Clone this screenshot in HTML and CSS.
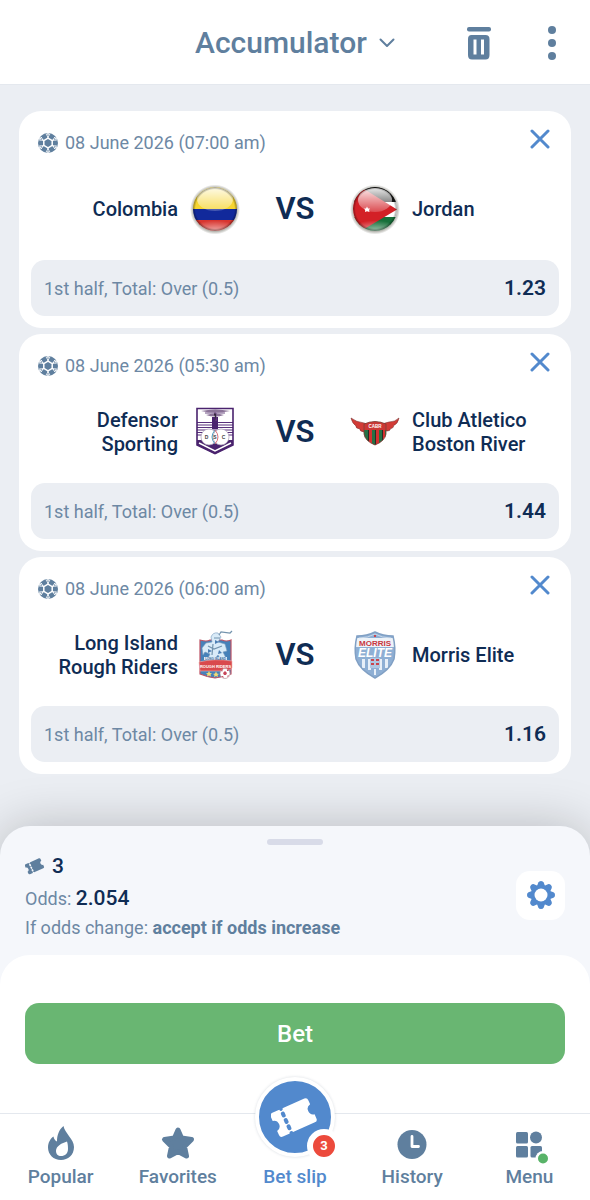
FILE: index.html
```html
<!DOCTYPE html>
<html lang="en">
<head>
<meta charset="utf-8">
<meta name="viewport" content="width=device-width, initial-scale=1">
<title>Accumulator</title>
<link rel="stylesheet" href="styles.css">
</head>
<body>
<svg class="defs" width="0" height="0" aria-hidden="true">
  <defs>
    <symbol id="ball" viewBox="0 0 20 20">
      <circle cx="10" cy="10" r="10" fill="#5f7f9e"/>
      <path d="M10 5.200 14.200 7.600V12.400L10 14.800 5.800 12.400V7.600Z" stroke="#fff" stroke-width="1.500" fill="none"/>
      <path d="M10 5.200V0M14.200 7.600 18.700 5M14.200 12.400 18.700 15M10 14.800V20M5.800 12.400 1.300 15M5.800 7.600 1.300 5" stroke="#fff" stroke-width="1.300" fill="none"/>
      <g stroke="#fff" stroke-width=".8" fill="#5f7f9e">
        <path id="seam" d="M8.200 1.200 10 4 11.800 1.200Z"/>
        <use href="#seam" transform="rotate(60 10 10)"/><use href="#seam" transform="rotate(120 10 10)"/><use href="#seam" transform="rotate(180 10 10)"/><use href="#seam" transform="rotate(240 10 10)"/><use href="#seam" transform="rotate(300 10 10)"/>
      </g>
    </symbol>
    <symbol id="cross" viewBox="0 0 20 20">
      <path d="M2 2 18 18M18 2 2 18" stroke="#5289cd" stroke-width="3" stroke-linecap="round"/>
    </symbol>
    <symbol id="ticket" viewBox="0 0 48 40">
      <g transform="rotate(-24 24 20)">
        <path fill="currentColor" d="M5 7H12.500A1.800 1.800 0 0 0 16.100 7H40Q43 7 43 10V14.500A5.600 5.600 0 0 0 43 25.500V30Q43 33 40 33H16.100A1.800 1.800 0 0 0 12.500 33H5Q2 33 2 30V25.500A5.600 5.600 0 0 0 2 14.500V10Q2 7 5 7ZM12.300 12V14A2 2 0 0 0 16.300 14V12A2 2 0 0 0 12.300 12ZM12.300 19V21A2 2 0 0 0 16.300 21V19A2 2 0 0 0 12.300 19ZM12.300 26V28A2 2 0 0 0 16.300 28V26A2 2 0 0 0 12.300 26Z"/>
      </g>
    </symbol>
    <linearGradient id="gloss" x1="0" y1="0" x2="0" y2="1">
      <stop offset="0" stop-color="#fff" stop-opacity=".9"/>
      <stop offset="1" stop-color="#fff" stop-opacity=".2"/>
    </linearGradient>
    <radialGradient id="glow" cx=".5" cy="1" r=".9">
      <stop offset="0" stop-color="#fff" stop-opacity=".7"/>
      <stop offset="1" stop-color="#fff" stop-opacity="0"/>
    </radialGradient>
    <radialGradient id="rim">
      <stop offset=".88" stop-color="#000" stop-opacity="0"/>
      <stop offset="1" stop-color="#000" stop-opacity=".4"/>
    </radialGradient>
    <radialGradient id="halo">
      <stop offset=".88" stop-color="#332" stop-opacity=".35"/>
      <stop offset="1" stop-color="#332" stop-opacity="0"/>
    </radialGradient>
    <clipPath id="disc"><circle cx="25" cy="25" r="22"/></clipPath>
    <clipPath id="dsc-shield"><path d="M7 1H43V38L25 47 7 38Z"/></clipPath>
    <clipPath id="river-shield"><path d="M14 17Q25 12 36 17V27Q35 34 25 38 15 34 14 27Z"/></clipPath>
    <clipPath id="morris-shield"><path d="M7 6Q17 6 25 2 33 6 43 6 46 18 44 29 40 40 25 48 10 40 6 29 4 18 7 6Z"/></clipPath>
  </defs>
</svg>

<header class="topbar">
  <label class="slip-type">
    <select class="slip-select" aria-label="Bet slip type"><option>Accumulator</option></select>
    <svg class="chevron" viewBox="0 0 16 10" aria-hidden="true"><path d="M1.500 1.500 8 8 14.500 1.500" fill="none" stroke="#5f7f9e" stroke-width="2" stroke-linecap="round" stroke-linejoin="round"/></svg>
  </label>
  <div class="topbar-actions">
    <button class="icon-button" type="button" aria-label="Clear bet slip">
      <svg width="24" height="34" viewBox="0 0 24 34"><rect x="0" y="1" width="24" height="4.500" rx="2" fill="#5f7f9e"/><path fill="#5f7f9e" fill-rule="evenodd" d="M4.500 9H18.500Q22.500 9 22.500 13V29Q22.500 33.500 18.500 33.500H5Q1 33.500 1 29V13Q1 9 4.500 9ZM6.500 13.500V28.500H9.500V13.500ZM14 13.500V28.500H17V13.500Z"/></svg>
    </button>
    <button class="icon-button" type="button" aria-label="More">
      <svg width="8" height="36" viewBox="0 0 8 36" fill="#5f7f9e"><circle cx="4" cy="5" r="4"/><circle cx="4" cy="18" r="4"/><circle cx="4" cy="31" r="4"/></svg>
    </button>
  </div>
</header>

<main class="events">
  <article class="event">
    <div class="event-head">
      <svg class="ball" aria-hidden="true"><use href="#ball"/></svg>
      <time class="event-date">08 June 2026 (07:00 am)</time>
      <button class="remove" type="button" aria-label="Remove"><svg class="cross"><use href="#cross"/></svg></button>
    </div>
    <div class="match">
      <span class="team home">Colombia</span>
      <svg class="crest" viewBox="0 0 50 50" aria-hidden="true">
        <circle cx="25" cy="25.500" r="25" fill="url(#halo)"/>
        <g clip-path="url(#disc)">
          <path fill="#f6d531" d="M0 0H50V25H0Z"/><path fill="#11299b" d="M0 25H50V36H0Z"/><path fill="#d8352f" d="M0 36H50V50H0Z"/>
          <ellipse cx="25" cy="15" rx="18" ry="12" fill="url(#gloss)"/>
          <ellipse cx="25" cy="42" rx="16" ry="7" fill="url(#glow)"/>
          <circle cx="25" cy="25" r="22" fill="url(#rim)"/>
        </g>
      </svg>
      <span class="versus">VS</span>
      <svg class="crest" viewBox="0 0 50 50" aria-hidden="true">
        <circle cx="25" cy="25.500" r="25" fill="url(#halo)"/>
        <g clip-path="url(#disc)">
          <path fill="#161616" d="M0 0H50V18H0Z"/><path fill="#fff" d="M0 18H50V33H0Z"/><path fill="#17703a" d="M0 33H50V50H0Z"/>
          <path fill="#d32026" d="M0 0H6L47 25.500 6 50H0Z"/>
          <ellipse cx="25" cy="16" rx="17" ry="12" fill="url(#gloss)"/>
          <ellipse cx="25" cy="42" rx="16" ry="7" fill="url(#glow)"/>
          <circle cx="25" cy="25" r="22" fill="url(#rim)"/>
          <path fill="#fff" d="M17 22.500 18 24.500 20 24.500 19 26 19.500 28 17 27.200 15 28 15.200 26 14 24.500 16 24.500Z"/>
        </g>
      </svg>
      <span class="team">Jordan</span>
    </div>
    <div class="pick"><span>1st half, Total: Over (0.5)</span><strong class="pick-odds">1.23</strong></div>
  </article>

  <article class="event">
    <div class="event-head">
      <svg class="ball" aria-hidden="true"><use href="#ball"/></svg>
      <time class="event-date">08 June 2026 (05:30 am)</time>
      <button class="remove" type="button" aria-label="Remove"><svg class="cross"><use href="#cross"/></svg></button>
    </div>
    <div class="match">
      <span class="team home">Defensor<br>Sporting</span>
      <svg class="crest" viewBox="0 0 50 50" aria-hidden="true">
        <g clip-path="url(#dsc-shield)">
          <path fill="#fff" d="M0 0H50V50H0Z"/>
          <path stroke="#59307c" stroke-width="1" d="M7 15.500H43M7 18H43M7 20.500H43M7 23H43M7 25.500H43M7 28H43"/>
          <path fill="#fff" d="M19 9H31V15H19Z"/>
          <path fill="#4a236e" d="M22 10H28V22H22ZM7 33H43V50H7Z"/>
          <path fill="#8b7398" d="M11 4Q25 1 40 4 25 7 11 4ZM16 8Q25 5 34 8 25 11 16 8Z"/>
          <path stroke="#6f4c83" stroke-width="1" d="M15 6H35M24 6H26V14"/>
          <path fill="none" stroke="#fff" stroke-width="1.500" d="M9 36 25 44 41 36"/>
        </g>
        <circle cx="19" cy="30" r="8" fill="#fff" stroke="#a89cb4" stroke-width=".7"/><circle cx="31" cy="30" r="8" fill="#fff" stroke="#a89cb4" stroke-width=".7"/>
        <path d="M25 23Q19 30 25 37" fill="none" stroke="#519cbd" stroke-width="1"/><path d="M25 23Q31 30 25 37" fill="none" stroke="#dd6e77" stroke-width="1"/>
        <g class="crest-text" font-size="5" fill="#454545"><text x="16.500" y="31.800">D</text><text x="25" y="31.800">S</text><text x="33.500" y="31.800">C</text></g>
        <path d="M7 1.500H43V38L25 46.500 7 38Z" fill="none" stroke="#4a236e" stroke-width="1.600"/>
      </svg>
      <span class="versus">VS</span>
      <svg class="crest" viewBox="0 0 50 50" aria-hidden="true">
        <path fill="#d23b36" stroke="#803331" stroke-width=".6" d="M1 11Q6 15 14 16 19 17 22 20H29Q32 16 39 15 45 15 49 11 48 17 43 19 45 20 40 22 41 24 35 24L14 25Q9 24 10 22 5 21 6 19 2 16 1 11Z"/>
        <g clip-path="url(#river-shield)">
          <path fill="#d3302f" d="M10 12H40V40H10Z"/>
          <path fill="#267044" d="M14 22H18V40H14ZM22 22H25V40H22ZM29 22H32V40H29ZM35 22H38V40H35Z"/>
          <path fill="#272b25" d="M18 22H19V40H18ZM25 22H26V40H25ZM32 22H33V40H32Z"/>
          <path fill="#cb3734" d="M12 13H38V23H12Z"/>
        </g>
        <path d="M14 17Q25 12 36 17V27Q35 34 25 38 15 34 14 27Z" fill="none" stroke="#784139" stroke-width=".8"/>
        <text class="crest-text" x="25" y="21" font-size="4.500" fill="#fff">CABR</text>
      </svg>
      <span class="team">Club Atletico<br>Boston River</span>
    </div>
    <div class="pick"><span>1st half, Total: Over (0.5)</span><strong class="pick-odds">1.44</strong></div>
  </article>

  <article class="event">
    <div class="event-head">
      <svg class="ball" aria-hidden="true"><use href="#ball"/></svg>
      <time class="event-date">08 June 2026 (06:00 am)</time>
      <button class="remove" type="button" aria-label="Remove"><svg class="cross"><use href="#cross"/></svg></button>
    </div>
    <div class="match">
      <span class="team home">Long Island<br>Rough Riders</span>
      <svg class="crest" viewBox="0 0 50 50" aria-hidden="true">
        <path fill="#4681b9" stroke="#bd5264" stroke-width="1.200" d="M10 10Q17 12 20 10H32Q36 12 41 10V44Q33 47 25 48 17 47 10 44Z"/>
        <path fill="#d9ebf8" stroke="#7899bb" stroke-width=".6" d="M21 7Q23 2 28 3L31 7 28 12 35 14 37 21 33 22 36 28 31 30 28 25 24 30H17L20 24 15 22 13 25 12 18 16 13 22 12Z"/>
        <path fill="none" stroke="#7393ad" stroke-width="1.200" d="M29 5 31 2 40 3 42 1M24 8H30M18 16 24 19 32 16M23 14 22 25"/>
        <path fill="#4c7eb3" d="M25 10 29 12 25 14ZM18 19 22 21 18 23ZM29 20 32 23 28 24Z"/>
        <path fill="#dfeaf6" d="M14 27H37V30H14Z"/>
        <path fill="#d9494d" stroke="#efb6b4" stroke-width=".6" d="M9 32Q25 28 42 31V38L38 41H10Z"/>
        <text class="crest-text" x="25.500" y="29.600" font-size="3" fill="#416b9c">LONG ISLAND</text>
        <text class="crest-text" x="25.500" y="37.500" font-size="4" fill="#fff">ROUGH RIDERS</text>
        <path fill="#f2da75" d="M19 41 20 43 22 43.300 20.500 44.500 21 46.500 19 45.500 17 46.500 17.500 44.500 16 43.300 18 43ZM26 41.500 27 43.500 29 44 27.500 45 28 47 26 46 24 47 24.500 45 23 44 25 43.500Z"/>
        <circle cx="35" cy="43.500" r="5" fill="#fff" stroke="#b8959e" stroke-width=".7"/><path fill="#c7475b" d="M35 41 37 43 36 45H34L33 43ZM31 40 33 39 32 42ZM37 39 39 41 37 41ZM31 46 33 46 34 48ZM39 45 38 47 37 46Z"/>
      </svg>
      <span class="versus">VS</span>
      <svg class="crest" viewBox="0 0 50 50" aria-hidden="true">
        <g clip-path="url(#morris-shield)">
          <path fill="#8eafd4" d="M0 0H50V50H0Z"/><path fill="#eef3f8" d="M6 8H44V17H6Z"/>
          <path fill="#e7eff8" d="M12 29H15V38H12ZM18 29H21V40H18ZM29 29H32V40H29ZM35 29H38V38H35ZM24 39H26V45H24Z"/>
          <path fill="#afc8e2" d="M20 28H30V38H20Z"/>
        </g>
        <path fill="none" stroke="#81a0c4" stroke-width="1.500" d="M7 6Q17 6 25 2 33 6 43 6 46 18 44 29 40 40 25 48 10 40 6 29 4 18 7 6Z"/>
        <path fill="none" stroke="#d7e2ee" stroke-width=".8" d="M9 8Q18 8 25 4 32 8 41 8"/>
        <path fill="#ca454d" d="M24 5H26V7H24ZM21 29H24V31H21ZM26 29H29V31H26ZM21 33H24V35H21ZM26 33H29V35H26Z"/>
        <text class="crest-text" x="25" y="16" font-size="8" fill="#c9373e">MORRIS</text>
        <text class="crest-text slanted" x="25" y="27" font-size="12" fill="#fff">ELITE</text>
      </svg>
      <span class="team">Morris Elite</span>
    </div>
    <div class="pick"><span>1st half, Total: Over (0.5)</span><strong class="pick-odds">1.16</strong></div>
  </article>
</main>

<section class="sheet" aria-label="Bet summary">
  <div class="grip"></div>
  <div class="summary">
    <div class="summary-lines">
      <p class="count"><svg class="count-icon" aria-hidden="true"><use href="#ticket"/></svg>3</p>
      <p class="odds">Odds: <strong class="odds-value">2.054</strong></p>
      <p class="change">If odds change: <strong>accept if odds increase</strong></p>
    </div>
    <button class="settings" type="button" aria-label="Settings">
      <svg width="30" height="30" viewBox="0 0 30 30"><g fill="#5289cd">
        <path id="teeth" d="M11 6 12.300 2.500Q13 1 15 1T17.700 2.500L19 6V24L17.700 27.500Q17 29 15 29T12.300 27.500L11 24Z"/><use href="#teeth" transform="rotate(45 15 15)"/><use href="#teeth" transform="rotate(90 15 15)"/><use href="#teeth" transform="rotate(135 15 15)"/><circle cx="15" cy="15" r="10"/></g><circle cx="15" cy="15" r="6.500" fill="#fff"/></svg>
    </button>
  </div>
  <div class="action"><button class="bet" type="button">Bet</button></div>
</section>

<nav class="tabs">
  <a class="tab" href="#"><svg class="tab-icon" viewBox="0 0 34 36" aria-hidden="true"><path fill="#5f7f9e" fill-rule="evenodd" d="M19.500 1C20.500 8 30 14 30 22 30 30 24 35 17 35 9.500 35 4 29.500 4 22.500 4 17.500 6.500 13.500 9.500 11.500 10 14 11 15.500 13 16.500 13 10 15 4.500 19.500 1ZM23 16.500C18 18 12 21 12 26 12 29 14 31 17 31 21 31 24 28.500 24 24 24 21 23.800 19 23 16.500Z"/></svg>Popular</a>
  <a class="tab" href="#"><svg class="tab-icon" viewBox="0 0 34 36" aria-hidden="true"><path fill="#5f7f9e" stroke="#5f7f9e" stroke-width="5" stroke-linejoin="round" d="M17 5 20.500 13 30.500 14.500 23.500 21.500 25.500 31 17 26.500 8.500 31 10.500 21.500 3.500 14.500 13.500 13Z"/></svg>Favorites</a>
  <a class="tab current" href="#" aria-current="page">
    <span class="slip-disc"><svg class="slip-icon" aria-hidden="true"><use href="#ticket"/></svg><span class="slip-count">3</span></span>Bet slip</a>
  <a class="tab" href="#"><svg class="tab-icon" viewBox="0 0 34 36" aria-hidden="true"><circle cx="17" cy="19.500" r="14.500" fill="#5f7f9e"/><path d="M17 11.500V21.500H23.500" fill="none" stroke="#fff" stroke-width="2.800" stroke-linecap="round" stroke-linejoin="round"/></svg>History</a>
  <a class="tab" href="#"><svg class="tab-icon menu-icon" viewBox="0 0 34 36" aria-hidden="true"><g fill="#5f7f9e"><rect x="4" y="7" width="12" height="11.500" rx="1.500"/><circle cx="24" cy="12.500" r="6"/><rect x="4" y="21" width="12" height="11.500" rx="1.500"/><rect x="18.500" y="21" width="11.500" height="11.500" rx="1.500"/></g><circle cx="31" cy="33.500" r="7.500" fill="#fff"/><circle cx="31" cy="33.500" r="5" fill="#58b368"/></svg>Menu</a>
</nav>
</body>
</html>
```
FILE: styles.css
```css
* { box-sizing: border-box; }

body {
  display: flex;
  flex-direction: column;
  min-height: 100vh;
  margin: 0;
  background: #ebeef3;
  color: #0f2c54;
  font-family: Roboto, "Liberation Sans", sans-serif;
}

button {
  padding: 0;
  border: 0;
  background: none;
  font: inherit;
  cursor: pointer;
}

p { margin: 0; }
svg { display: block; flex: none; }
.defs { position: absolute; }

.topbar {
  display: grid;
  grid-template-columns: 1fr auto 1fr;
  align-items: center;
  height: 85px;
  padding: 2px 24px 0;
  border-bottom: 1px solid #e4e8ee;
  background: #fff;
}

.slip-type {
  display: flex;
  grid-column: 2;
  align-items: center;
  gap: 12px;
}

.slip-select {
  padding: 0;
  border: 0;
  appearance: none;
  background: none;
  color: #5f7f9e;
  font: 500 30px/40px Roboto, "Liberation Sans", sans-serif;
}

.chevron { width: 16px; height: 10px; }

.topbar-actions {
  display: flex;
  justify-content: flex-end;
  gap: 45px;
}

.icon-button {
  display: grid;
  place-items: center;
  min-width: 28px;
  height: 44px;
}

.events {
  display: flex;
  flex: 1;
  flex-direction: column;
  gap: 6px;
  padding: 26px 19px 52px;
}

.event {
  padding: 12px;
  border-radius: 22px;
  background: #fff;
}

.event-head {
  display: flex;
  align-items: center;
  gap: 7px;
  height: 40px;
  padding: 0 4px 0 7px;
}

.ball { width: 20px; height: 20px; }
.event-date { flex: 1; color: #6d88a4; font-size: 18px; line-height: 24px; }

.remove {
  display: grid;
  place-items: center;
  width: 30px;
  height: 30px;
  margin-bottom: 8px;
}

.cross { width: 20px; height: 20px; }

.match {
  display: grid;
  grid-template-columns: 1fr 50px 86px 50px 1fr;
  align-items: center;
  column-gap: 12px;
  height: 97px;
  padding-bottom: 6px;
}

.team { font-size: 20px; font-weight: 500; line-height: 24px; }
.home { text-align: right; }
.crest { width: 50px; height: 50px; }
.versus { font-size: 31px; font-weight: 600; line-height: 36px; text-align: center; }

.crest-text {
  font-family: "Liberation Sans", sans-serif;
  font-weight: 700;
  text-anchor: middle;
}

.slanted { font-style: italic; }

.pick {
  display: flex;
  align-items: center;
  justify-content: space-between;
  height: 56px;
  padding: 0 13px;
  border-radius: 14px;
  background: #ebeef3;
  color: #6d88a4;
  font-size: 18px;
}

.pick-odds { color: #0f2c54; font-size: 21px; font-weight: 600; }

.sheet {
  padding-top: 13px;
  border-radius: 30px 30px 0 0;
  background: #f5f7fb;
  box-shadow: 0 0 50px rgb(0 0 0 / 22%);
}

.grip {
  width: 56px;
  height: 6px;
  margin: 0 auto;
  border-radius: 3px;
  background: #d8dbe8;
}

.summary {
  display: flex;
  align-items: center;
  justify-content: space-between;
  height: 110px;
  padding: 0 25px 10px;
}

.summary-lines { color: #6d88a4; font-size: 18px; }
.count { display: flex; align-items: center; gap: 7px; color: #0f2c54; font-size: 21px; font-weight: 500; line-height: 34px; }
.count-icon { width: 20px; height: 18px; color: #5f7f9e; }
.odds { line-height: 32px; }
.odds-value { color: #0f2c54; font-size: 21px; font-weight: 500; line-height: 24px; }
.change { line-height: 26px; }
.change strong { color: #5f7f9e; font-weight: 700; }

.settings {
  display: grid;
  flex: none;
  place-items: center;
  width: 49px;
  height: 49px;
  border-radius: 14px;
  background: #fff;
}

.action {
  padding: 48px 25px 49px;
  border-radius: 30px 30px 0 0;
  background: #fff;
}

.bet {
  display: block;
  width: 100%;
  height: 61px;
  border-radius: 14px;
  background: #69b672;
  color: #fff;
  font-size: 24px;
  font-weight: 500;
}

.tabs {
  display: grid;
  grid-template-columns: repeat(5, 1fr);
  height: 88px;
  padding: 0 2px;
  border-top: 1px solid #e4e8ee;
  background: #fff;
  z-index: 1;
}

.tab {
  display: flex;
  position: relative;
  flex-direction: column;
  align-items: center;
  justify-content: flex-end;
  padding-bottom: 12px;
  color: #5f7f9e;
  font-size: 19px;
  font-weight: 500;
  line-height: 24px;
  text-decoration: none;
}

.tab-icon { width: 34px; height: 36px; margin-bottom: 4px; overflow: visible; }
.current { color: #5289cd; }

/* Raised disc straddles the top edge of the tab bar */
.slip-disc {
  display: grid;
  position: absolute;
  top: -37px;
  place-items: center;
  width: 80px;
  height: 80px;
  border: 4px solid #fff;
  border-radius: 50%;
  background: #5289cd;
  box-shadow: 0 0 3px rgb(40 60 90 / 18%);
  color: #fff;
}

.slip-icon { width: 48px; height: 40px; }

.slip-count {
  position: absolute;
  right: -10px;
  bottom: -10px;
  width: 34px;
  height: 34px;
  border: 6px solid #fff;
  border-radius: 50%;
  background: #ec4a3c;
  font-size: 13px;
  font-weight: 700;
  line-height: 22px;
  text-align: center;
}
```
